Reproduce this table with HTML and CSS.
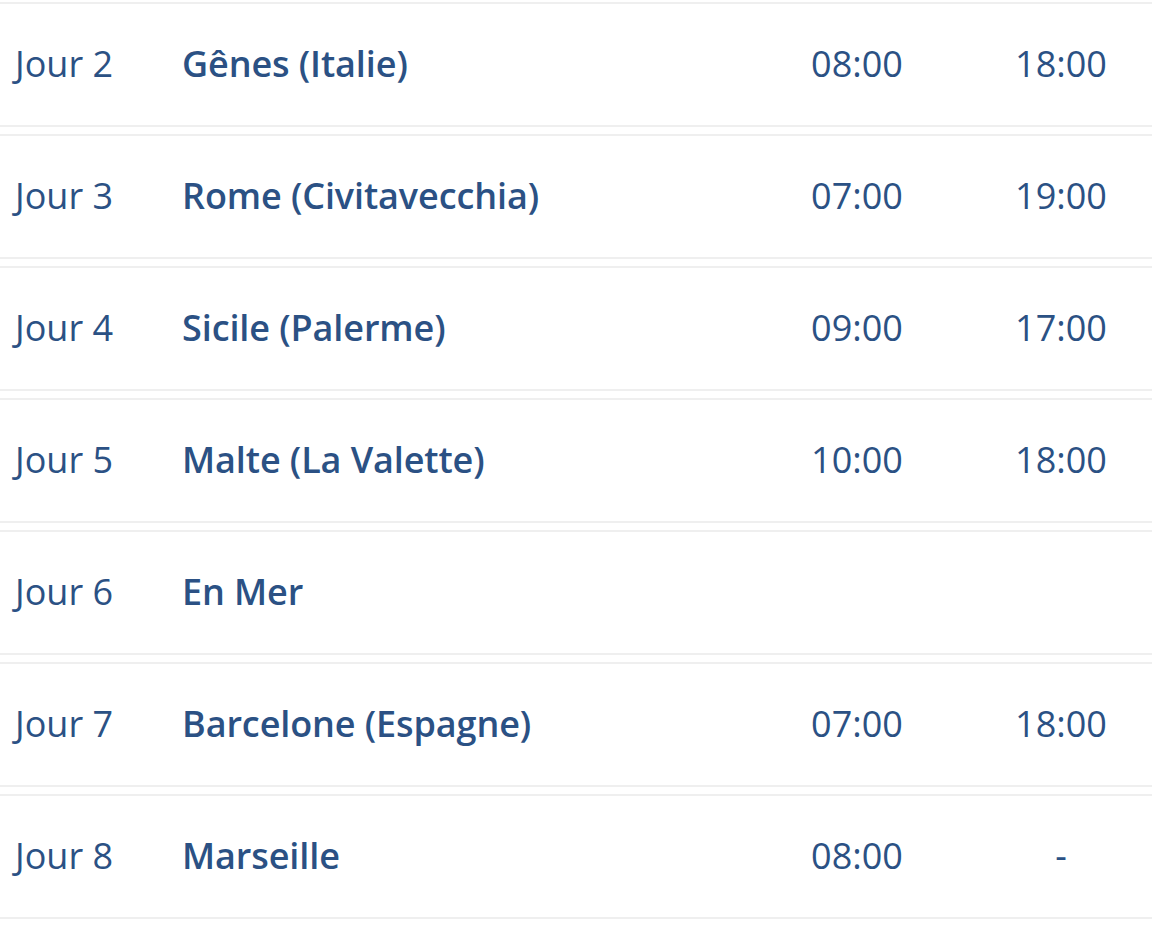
FILE: index.html
```html
<!DOCTYPE html>
<html lang="fr">
<head>
<meta charset="utf-8">
<title>Itinéraire</title>
<link rel="stylesheet" href="styles.css">
</head>
<body>
<div class="itinerary">
  <div class="row"><div class="day">Jour 2</div><div class="port">Gênes (Italie)</div><div class="time">08:00</div><div class="time">18:00</div></div>
  <div class="row"><div class="day">Jour 3</div><div class="port">Rome (Civitavecchia)</div><div class="time">07:00</div><div class="time">19:00</div></div>
  <div class="row"><div class="day">Jour 4</div><div class="port">Sicile (Palerme)</div><div class="time">09:00</div><div class="time">17:00</div></div>
  <div class="row"><div class="day">Jour 5</div><div class="port">Malte (La Valette)</div><div class="time">10:00</div><div class="time">18:00</div></div>
  <div class="row"><div class="day">Jour 6</div><div class="port">En Mer</div><div class="time"></div><div class="time"></div></div>
  <div class="row"><div class="day">Jour 7</div><div class="port">Barcelone (Espagne)</div><div class="time">07:00</div><div class="time">18:00</div></div>
  <div class="row"><div class="day">Jour 8</div><div class="port">Marseille</div><div class="time">08:00</div><div class="time">-</div></div>
</div>
</body>
</html>
```
FILE: styles.css
```css
html, body {
  margin: 0;
  padding: 0;
  background: #ffffff;
}
body {
  font-family: "Open Sans", "Noto Sans", sans-serif;
  color: #2b5184;
}
.itinerary {
  padding-top: 2px;
  display: flex;
  flex-direction: column;
  gap: 7px;
}
.row {
  display: grid;
  grid-template-columns: 143px 1fr 180px 180px;
  column-gap: 24px;
  align-items: center;
  height: 121px;
  padding: 0 1px 0 15px;
  border-top: 2px solid #efefef;
  border-bottom: 2px solid #efefef;
  font-size: 36px;
  line-height: 1.3;
}
.day {
  font-weight: 400;
}
.port {
  font-weight: 600;
  letter-spacing: -0.1px;
}
.time {
  text-align: center;
}
```
